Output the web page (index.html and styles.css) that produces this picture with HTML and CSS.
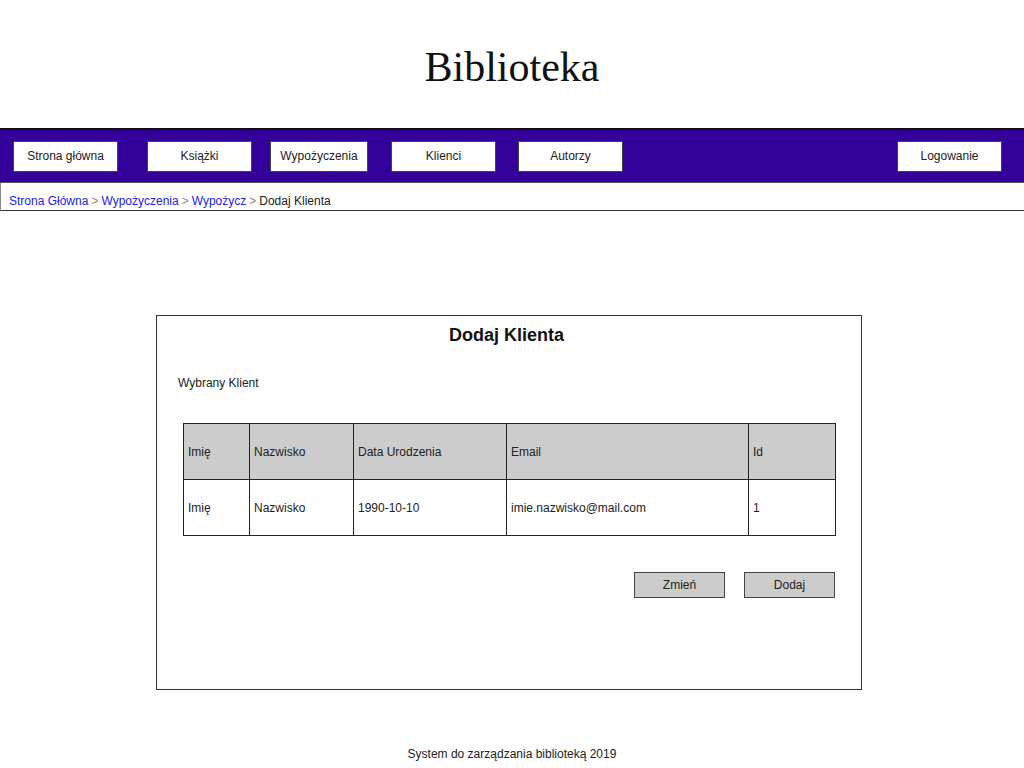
FILE: index.html
```html
<!DOCTYPE html>
<html lang="pl">
<head>
<meta charset="utf-8">
<title>Biblioteka</title>
<link rel="stylesheet" href="styles.css">
</head>
<body>
<header class="top">
  <h1 class="title">Biblioteka</h1>
</header>
<nav class="nav">
  <a class="nav-btn b1">Strona główna</a>
  <a class="nav-btn b2">Książki</a>
  <a class="nav-btn b3">Wypożyczenia</a>
  <a class="nav-btn b4">Klienci</a>
  <a class="nav-btn b5">Autorzy</a>
  <a class="nav-btn b6">Logowanie</a>
</nav>
<div class="crumbs">
  <a class="crumb">Strona Główna</a><span class="sep">&gt;</span><a class="crumb">Wypożyczenia</a><span class="sep">&gt;</span><a class="crumb">Wypożycz</a><span class="sep">&gt;</span><span class="current">Dodaj Klienta</span>
</div>
<main class="main">
  <section class="panel">
    <h2 class="panel-title">Dodaj Klienta</h2>
    <p class="label">Wybrany Klient</p>
    <table class="grid">
      <colgroup>
        <col class="c1"><col class="c2"><col class="c3"><col class="c4"><col class="c5">
      </colgroup>
      <thead>
        <tr><th>Imię</th><th>Nazwisko</th><th>Data Urodzenia</th><th>Email</th><th>Id</th></tr>
      </thead>
      <tbody>
        <tr><td>Imię</td><td>Nazwisko</td><td>1990-10-10</td><td>imie.nazwisko@mail.com</td><td>1</td></tr>
      </tbody>
    </table>
    <div class="actions">
      <button class="btn">Zmień</button>
      <button class="btn">Dodaj</button>
    </div>
  </section>
</main>
<footer class="footer">System do zarządzania biblioteką 2019</footer>
</body>
</html>
```
FILE: styles.css
```css
html, body {
  margin: 0;
  padding: 0;
  background: #fff;
}
body {
  font-family: "Liberation Sans", "DejaVu Sans", sans-serif;
  font-size: 12px;
  color: #222;
  width: 1024px;
  height: 768px;
  overflow: hidden;
}
.top {
  height: 128px;
  display: flex;
  justify-content: center;
}
.title {
  margin: 0;
  padding-top: 42px;
  font-family: "Liberation Serif", serif;
  font-weight: normal;
  font-size: 42px;
  line-height: 50px;
  color: #111;
}
.nav {
  box-sizing: border-box;
  height: 55px;
  background: #330099;
  border-top: 2px solid #111;
  border-bottom: 1px solid #555;
  display: flex;
  align-items: center;
  padding-left: 13px;
}
.nav-btn {
  box-sizing: border-box;
  height: 31px;
  width: 105px;
  background: #fff;
  border: 1px solid #444;
  display: flex;
  align-items: center;
  justify-content: center;
  color: #222;
  font-size: 12px;
}
.b2 { margin-left: 29px; }
.b3 { margin-left: 18px; width: 98px; }
.b4 { margin-left: 23px; }
.b5 { margin-left: 22px; }
.b6 { margin-left: auto; margin-right: 22px; }
.crumbs {
  box-sizing: border-box;
  height: 28px;
  border-left: 1px solid #888;
  border-bottom: 1px solid #333;
  padding: 11px 0 0 8px;
  font-size: 12px;
  line-height: 15px;
}
.crumb { color: #2222ee; }
.sep { color: #888; margin: 0 3px; }
.current { color: #222; }
.main {
  padding-top: 104px;
  padding-left: 156px;
  height: 374px;
}
.panel {
  box-sizing: border-box;
  width: 706px;
  height: 375px;
  border: 1px solid #333;
  padding: 0 26px 0 21px;
  display: flex;
  flex-direction: column;
}
.panel-title {
  margin: 7px 0 0;
  text-align: center;
  font-size: 18px;
  line-height: 24px;
  font-weight: bold;
  color: #111;
}
.label {
  margin: 29px 0 0;
  font-size: 12px;
  line-height: 15px;
}
.grid {
  margin: 32px 0 0 5px;
  width: 652px;
  border-collapse: collapse;
  font-size: 12px;
  table-layout: fixed;
}
.c1 { width: 66px; }
.c2 { width: 104px; }
.c3 { width: 153px; }
.c4 { width: 242px; }
.c5 { width: 87px; }
.grid th, .grid td {
  border: 1px solid #222;
  height: 55px;
  padding: 0 0 0 4px;
  text-align: left;
  font-weight: normal;
  color: #222;
}
.grid thead th {
  background: #cccccc;
}
.actions {
  display: flex;
  justify-content: flex-end;
  gap: 19px;
  margin-top: 36px;
}
.btn {
  box-sizing: border-box;
  width: 91px;
  height: 26px;
  background: #cccccc;
  border: 1px solid #444;
  font-family: inherit;
  font-size: 12px;
  color: #222;
  padding: 0;
}
.footer {
  text-align: center;
  margin-top: 58px;
  font-size: 12px;
  line-height: 15px;
  color: #222;
}
```
